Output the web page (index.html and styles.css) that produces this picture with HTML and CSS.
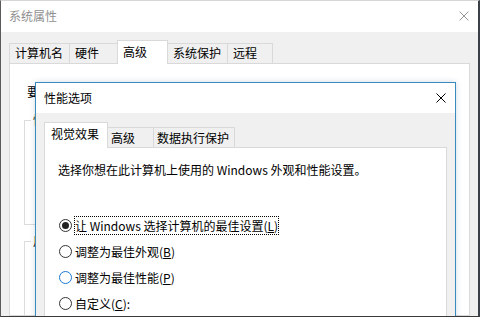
FILE: index.html
```html
<!DOCTYPE html>
<html lang="zh-CN">
<head>
<meta charset="utf-8">
<title>性能选项</title>
<link rel="stylesheet" href="styles.css">
</head>
<body>
<div class="screen">
  <div class="win">
    <div class="titlebar">
      <span class="title title-back">系统属性</span>
      <svg class="close close-back" width="10" height="10" viewBox="0 0 10 10"><path d="M0.5 0.5 L9.5 9.5 M9.5 0.5 L0.5 9.5" stroke="#9a9a9a" stroke-width="1" fill="none"/></svg>
    </div>
    <div class="body">
      <div class="tabs tabs-back">
        <div class="tab tab-b1">计算机名</div>
        <div class="tab tab-b2">硬件</div>
        <div class="tab tab-b3 active">高级</div>
        <div class="tab tab-b4">系统保护</div>
        <div class="tab tab-b5">远程</div>
      </div>
      <div class="panel panel-back">
        <p class="note">要</p>
        <fieldset class="group group-1"><legend>性</legend></fieldset>
        <fieldset class="group group-2"><legend>用</legend></fieldset>
      </div>
    </div>
  </div>

  <div class="dialog">
    <div class="titlebar dlg-titlebar">
      <span class="title title-dlg">性能选项</span>
      <svg class="close close-dlg" width="10" height="10" viewBox="0 0 10 10"><path d="M0.5 0.5 L9.5 9.5 M9.5 0.5 L0.5 9.5" stroke="#000" stroke-width="1" fill="none"/></svg>
    </div>
    <div class="body dlg-body">
      <div class="tabs tabs-dlg">
        <div class="tab tab-d1 active">视觉效果</div>
        <div class="tab tab-d2">高级</div>
        <div class="tab tab-d3">数据执行保护</div>
      </div>
      <div class="panel panel-dlg">
        <p class="intro">选择你想在此计算机上使用的 Windows 外观和性能设置。</p>
        <div class="options">
          <div class="option">
            <span class="radio checked"></span>
            <span class="label focus">让 Windows 选择计算机的最佳设置(<u>L</u>)</span>
          </div>
          <div class="option">
            <span class="radio"></span>
            <span class="label">调整为最佳外观(<u>B</u>)</span>
          </div>
          <div class="option">
            <span class="radio hover"></span>
            <span class="label">调整为最佳性能(<u>P</u>)</span>
          </div>
          <div class="option">
            <span class="radio"></span>
            <span class="label">自定义(<u>C</u>):</span>
          </div>
        </div>
      </div>
    </div>
  </div>
</div>
</body>
</html>
```

FILE: styles.css
```css
* { box-sizing: border-box; }

html, body {
  margin: 0;
  padding: 0;
}

body {
  width: 480px;
  height: 317px;
  overflow: hidden;
  background: #fff;
  font-family: "Noto Sans CJK SC", "Microsoft YaHei", sans-serif;
  font-size: 12px;
  color: #000;
}

.screen {
  position: relative;
  width: 480px;
  height: 317px;
  overflow: hidden;
  border-top: 1px solid #d6d6d6;
  border-left: 1px solid #5a5a5a;
  border-right: 2px solid #3b4048;
  border-bottom: 1px solid #3a3a3a;
  background: #f0f0f0;
}

.win {
  display: flex;
  flex-direction: column;
  height: 100%;
}

.titlebar {
  flex: none;
  display: flex;
  align-items: center;
  justify-content: space-between;
  height: 31px;
  background: #fff;
  padding: 0 9px 2px 8px;
}

.title {
  line-height: 16px;
}

.title-back {
  color: #8f8f8f;
}

.close {
  display: block;
  flex: none;
}

.body {
  flex: 1;
  display: flex;
  flex-direction: column;
  background: #f0f0f0;
  padding: 8px 8px 0 8px;
  min-height: 0;
}

.tabs {
  flex: none;
  display: flex;
  align-items: flex-end;
  height: 23px;
}

.tab {
  height: 20px;
  border: 1px solid #d9d9d9;
  border-bottom: none;
  background: #f0f0f0;
  line-height: 18px;
  padding-left: 5px;
  white-space: nowrap;
  margin-left: -1px;
}

.tab.active {
  position: relative;
  z-index: 1;
  background: #fff;
  height: 24px;
  margin-bottom: -1px;
  line-height: 22px;
}

.tab-b1 { width: 61px; margin-left: 0; }
.tab-b2 { width: 49px; }
.tab-b3 { width: 51px; }
.tab-b4 { width: 61px; }
.tab-b5 { width: 46px; }

.panel {
  flex: 1;
  background: #fff;
  border: 1px solid #d9d9d9;
  min-height: 0;
}

.panel-back {
  padding: 20px 0 0 14px;
}

.note {
  margin: 0 0 0 3px;
  line-height: 16px;
  white-space: nowrap;
}

.group {
  margin: 0;
  padding: 0;
  border: 1px solid #dcdcdc;
  width: 430px;
}

.group legend {
  margin-left: 6px;
  padding: 0 2px;
  line-height: 16px;
}

.group-1 {
  margin-top: 12px;
  height: 113px;
}

.group-2 {
  margin-top: 8px;
  height: 100px;
}

/* foreground dialog */
.dialog {
  position: absolute;
  left: 34px;
  top: 81px;
  width: 421px;
  height: 240px;
  display: flex;
  flex-direction: column;
  border: 1px solid #3a8bbd;
  background: #f0f0f0;
  box-shadow: 0 0 6px rgba(0, 60, 100, 0.18);
}

.dlg-titlebar {
  height: 30px;
  padding: 0 9px 0 8px;
}

.dlg-body {
  padding: 9px 8px 0 8px;
}

.tabs-dlg {
  height: 25px;
}

.tabs-dlg .tab {
  padding-left: 3px;
  line-height: 19px;
}

.tabs-dlg .tab.active {
  height: 26px;
  padding-left: 6px;
  line-height: 22px;
}

.tab-d1 { width: 64px; margin-left: 0; }
.tab-d2 { width: 47px; }
.tab-d3 { width: 82px; }

.panel-dlg {
  padding: 14px 0 0 13px;
}

.intro {
  margin: 0;
  line-height: 16px;
  white-space: nowrap;
}

.options {
  display: flex;
  flex-direction: column;
  margin-top: 34px;
}

.option {
  display: flex;
  align-items: center;
  height: 26px;
}

.radio {
  position: relative;
  flex: none;
  width: 13px;
  height: 13px;
  margin-left: 1px;
  border: 1px solid #333;
  border-radius: 50%;
  background: #fff;
}

.radio.hover {
  border-color: #1a7ad4;
}

.radio.checked::after {
  content: "";
  position: absolute;
  left: 2px;
  top: 2px;
  width: 7px;
  height: 7px;
  border-radius: 50%;
  background: #222;
}

.label {
  margin-left: 2px;
  border: 1px solid transparent;
  line-height: 17px;
  white-space: nowrap;
}

.label.focus {
  border: 1px dotted #000;
}

.label u {
  text-decoration: underline;
  text-underline-offset: 1px;
}
```
